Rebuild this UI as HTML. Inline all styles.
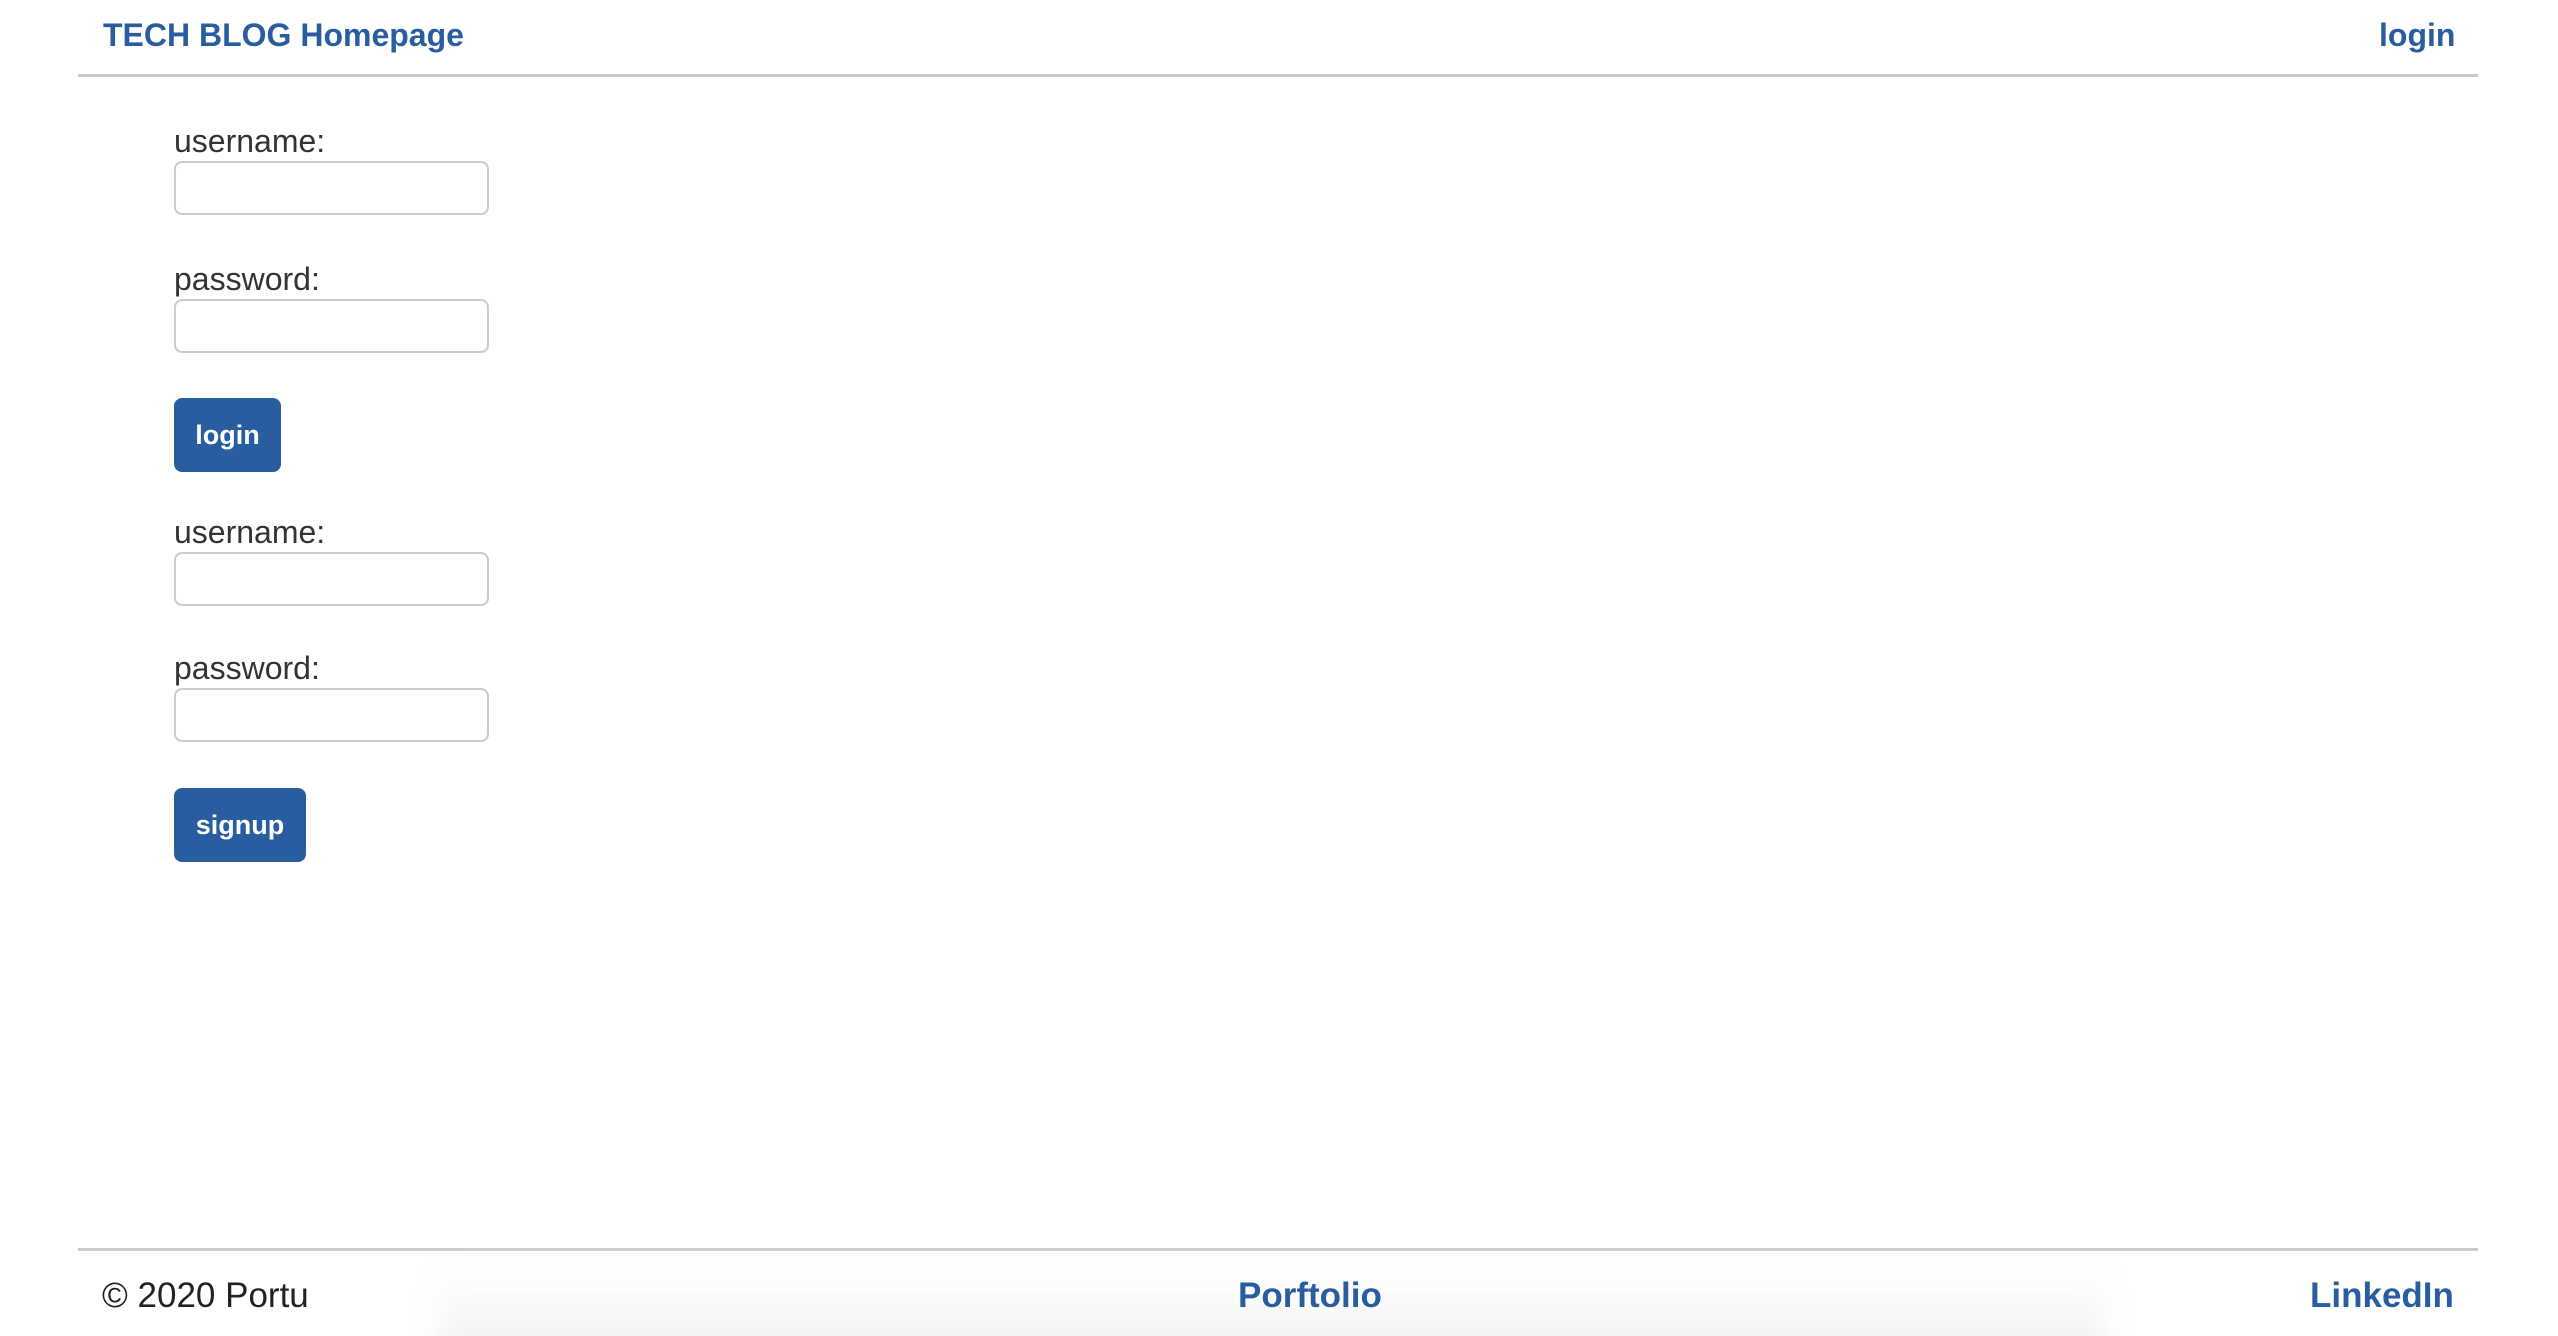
<!DOCTYPE html>
<html><head><meta charset="utf-8"><style>
html,body{margin:0;padding:0;width:2558px;height:1336px;background:#fff;overflow:hidden;position:relative;font-family:"Liberation Sans",Arial,sans-serif}
.a{position:absolute;line-height:1;white-space:nowrap}
.blue{color:#285ea0;font-weight:bold}
.lbl{color:#333;font-size:32px;left:174px}
.inp{position:absolute;left:174px;width:311px;height:50px;border:2px solid #ccc;border-radius:8px;background:#fff}
.btn{position:absolute;left:174px;height:74px;background:#285ea0;border-radius:8px;color:#fff;font-weight:bold;font-size:27px;display:flex;align-items:center;justify-content:center}
.line{position:absolute;left:78px;width:2400px;height:3px;background:#ccc}
</style></head><body>
<div class="a blue" style="left:103px;top:19px;font-size:32px">TECH BLOG Homepage</div>
<div class="a blue" style="left:2379px;top:19px;font-size:32px">login</div>
<div class="line" style="top:74px"></div>

<div class="a lbl" style="top:125px">username:</div>
<div class="inp" style="top:161px"></div>
<div class="a lbl" style="top:263px">password:</div>
<div class="inp" style="top:299px"></div>
<div class="btn" style="top:398px;width:107px">login</div>

<div class="a lbl" style="top:516px">username:</div>
<div class="inp" style="top:552px"></div>
<div class="a lbl" style="top:652px">password:</div>
<div class="inp" style="top:688px"></div>
<div class="btn" style="top:788px;width:132px">signup</div>

<div class="line" style="top:1248px"></div>
<div style="position:absolute;left:440px;top:1270px;width:1665px;height:100px;filter:blur(14px);background:linear-gradient(#fff,#eee)"></div>
<div class="a" style="left:102px;top:1278px;font-size:35px;color:#222">© 2020 Portu</div>
<div class="a blue" style="left:1238px;top:1278px;font-size:35px">Porftolio</div>
<div class="a blue" style="left:2310px;top:1278px;font-size:35px">LinkedIn</div>
</body></html>
